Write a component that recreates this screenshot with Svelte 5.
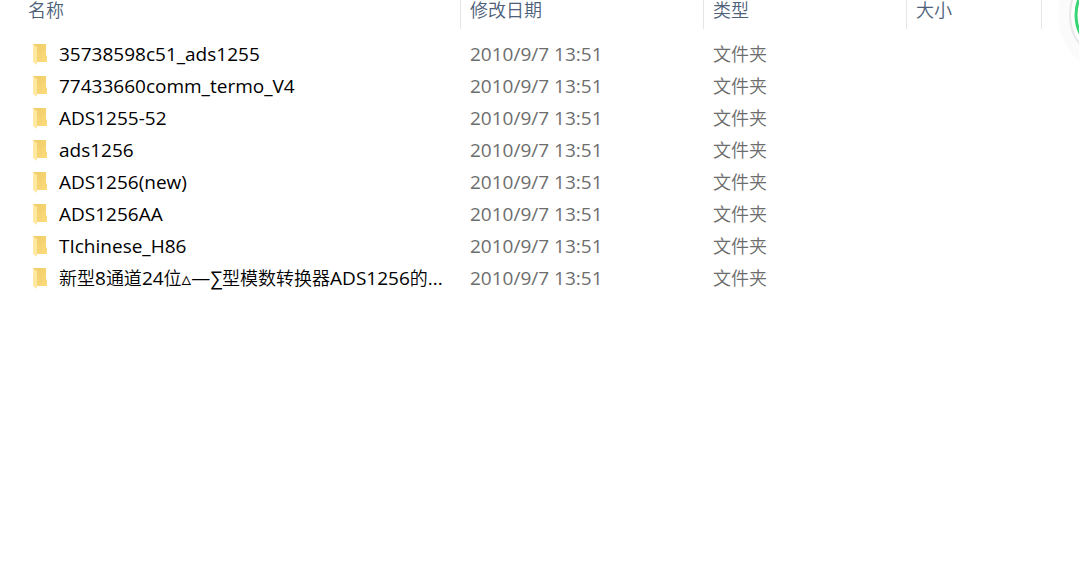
<script lang="ts">
	interface Folder {
		name: string;
		modified: string;
	}

	const columns = ['名称', '修改日期', '类型', '大小'];

	const names = [
		'35738598c51_ads1255',
		'77433660comm_termo_V4',
		'ADS1255-52',
		'ads1256',
		'ADS1256(new)',
		'ADS1256AA',
		'TIchinese_H86',
		'新型8通道24位▵—∑型模数转换器ADS1256的...'
	];

	const folders: Folder[] = names.map((name) => ({ name, modified: '2010/9/7 13:51' }));

	// Han runs are set one pixel smaller than the latin ones
	const splitRuns = (text: string) => text.split(/([\u4e00-\u9fff]+)/).filter(Boolean);
	const isHan = (text: string) => /^[\u4e00-\u9fff]/.test(text);
</script>

<main>
	<table>
		<colgroup>
			<col class="col-name" />
			<col class="col-date" />
			<col class="col-type" />
			<col class="col-size" />
			<col />
		</colgroup>
		<thead>
			<tr>
				{#each columns as column}
					<th scope="col"><button type="button">{column}</button></th>
				{/each}
				<td></td>
			</tr>
		</thead>
		<tbody>
			{#each folders as folder}
				<tr>
					<td>
						<div class="name">
							<svg class="folder" viewBox="0 0 15 22" aria-hidden="true">
								<defs>
									<linearGradient id="back" x1="0" y1="0" x2="1" y2="1">
										<stop offset="0" stop-color="#f0cb68" />
										<stop offset="1" stop-color="#fbdb7b" />
									</linearGradient>
								</defs>
								<path d="M0 1H13V12L14 13V19H3L0 18Z" fill="url(#back)" />
								<path d="M0 1L4 4V22L0 19Z" fill="#ffe8a2" />
							</svg>
							<span>{#each splitRuns(folder.name) as run}<span class:han={isHan(run)}>{run}</span>{/each}</span>
						</div>
					</td>
					<td class="date">{folder.modified}</td>
					<td class="type">文件夹</td>
					<td></td>
					<td></td>
				</tr>
			{/each}
		</tbody>
	</table>

	<svg class="float-ball" viewBox="0 0 120 120" aria-hidden="true">
		<circle cx="60" cy="60" r="60" fill="#fbfbfb" />
		<circle cx="60" cy="60" r="48" fill="#fff" stroke="#e8e8e8" stroke-width="2" />
		<circle cx="60" cy="60" r="42" fill="#fff" stroke="#35d673" stroke-width="3" />
	</svg>
</main>

<style>
	:global(body) {
		margin: 0;
		background: #fff;
	}

	main {
		position: relative;
		min-height: 100vh;
		overflow: hidden;
		font-family: 'Open Sans', 'Noto Sans CJK SC', 'DejaVu Sans', sans-serif;
		font-size: 18px;
		color: #6d6d6d;
	}

	table {
		width: 100%;
		table-layout: fixed;
		border-collapse: separate;
		border-spacing: 0;
	}

	.col-name {
		width: 461px;
	}

	.col-date {
		width: 243px;
	}

	.col-type {
		width: 203px;
	}

	.col-size {
		width: 135px;
	}

	th {
		height: 29px;
		padding: 0;
		border-right: 1px solid #e5e5e5;
		box-sizing: border-box;
		text-align: left;
		vertical-align: top;
	}

	th button {
		display: block;
		width: 100%;
		padding: 0 9px;
		border: 0;
		background: none;
		font-family: 'Noto Sans CJK SC', sans-serif;
		font-weight: 350;
		font-size: 18px;
		line-height: 18px;
		color: #4c607a;
		text-align: left;
	}

	th:first-child button {
		padding-left: 28px;
	}

	tbody::before {
		content: '';
		display: table-row;
		height: 9px;
	}

	tbody td {
		height: 32px;
		padding: 0 9px;
		line-height: 32px;
		white-space: nowrap;
	}

	tbody td:first-child {
		padding: 0 0 0 33px;
	}

	.name {
		display: flex;
		align-items: center;
		gap: 11px;
		height: 32px;
		font-size: 19px;
		color: #000;
	}

	.han {
		font-size: 18px;
		font-weight: 350;
	}

	.folder {
		flex: none;
		width: 15px;
		height: 22px;
	}

	.date {
		font-size: 19px;
	}

	.type {
		font-weight: 350;
	}

	.float-ball {
		position: absolute;
		top: -45px;
		right: -99px;
		width: 120px;
		height: 120px;
	}
</style>
